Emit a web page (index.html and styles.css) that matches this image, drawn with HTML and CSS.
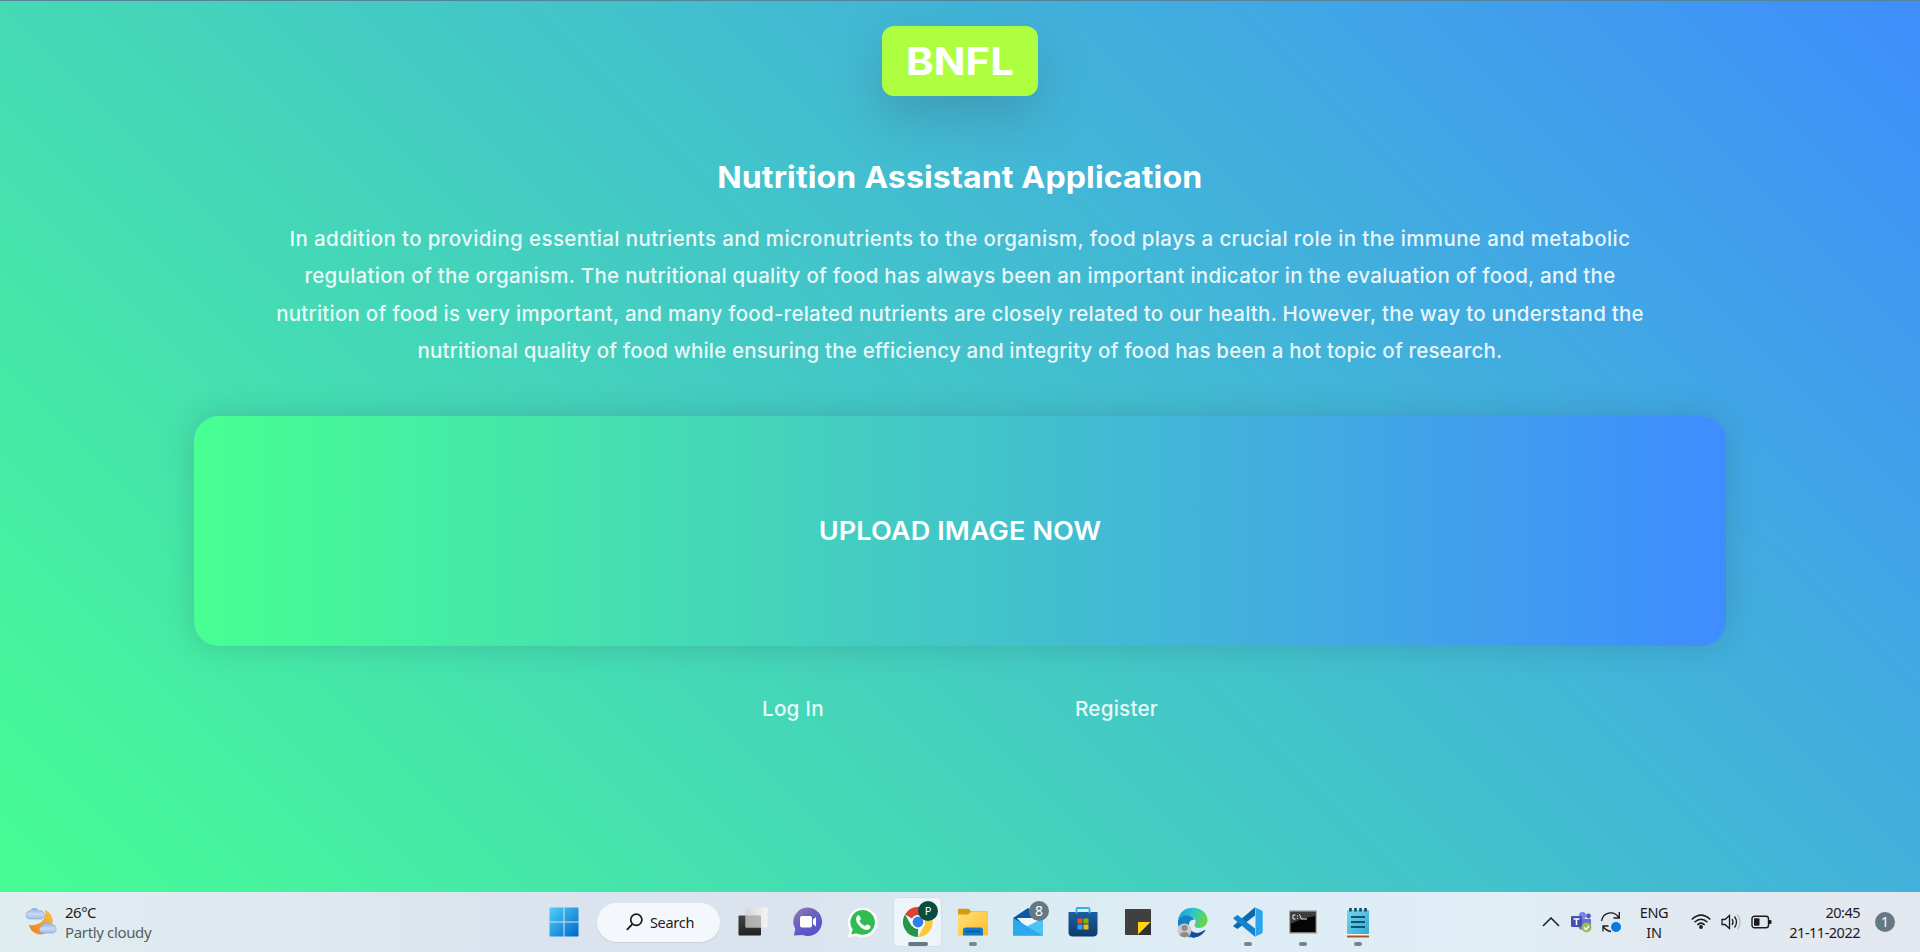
FILE: index.html
```html
<!DOCTYPE html>
<html lang="en">
<head>
<meta charset="utf-8">
<title>Nutrition Assistant Application</title>
<link rel="stylesheet" href="styles.css">
</head>
<body>
<main class="page">
  <h1 class="logo"><span class="logo-text">BNFL</span></h1>
  <h2 class="title">Nutrition Assistant Application</h2>
  <p class="intro">
    <span class="line line-1">In addition to providing essential nutrients and micronutrients to the organism, food plays a crucial role in the immune and metabolic</span>
    <span class="line line-2">regulation of the organism. The nutritional quality of food has always been an important indicator in the evaluation of food, and the</span>
    <span class="line line-3">nutrition of food is very important, and many food-related nutrients are closely related to our health. However, the way to understand the</span>
    <span class="line line-4">nutritional quality of food while ensuring the efficiency and integrity of food has been a hot topic of research.</span>
  </p>
  <div class="upload"><span class="upload-text">UPLOAD IMAGE NOW</span></div>
  <nav class="links"><a class="login">Log In</a><a class="register">Register</a></nav>
</main>
<footer class="taskbar">
  <div class="weather">
    <svg width="32" height="30" viewBox="0 0 32 30">
      <defs>
        <linearGradient id="moon" x1="1" y1="0" x2="0" y2="1"><stop offset="0" stop-color="#f9c23c"/><stop offset="1" stop-color="#ee7f22"/></linearGradient>
        <linearGradient id="cloud" x1="0" y1="0" x2="0" y2="1"><stop offset="0" stop-color="#8fabe6"/><stop offset=".55" stop-color="#c9d9f7"/><stop offset="1" stop-color="#a3bcf0"/></linearGradient>
      </defs>
      <path d="M20 3c9 3 10 16 3 22C16 30 6 27 4 18c8 1 18-3 16-15z" fill="url(#moon)"/>
      <path d="M5 12a4 4 0 0 1 0-8 5 5 0 0 1 9 0 4 4 0 0 1 2 8z" fill="url(#cloud)" stroke="#86a2dc" stroke-width=".6"/>
      <path d="M17 26a3.600 3.600 0 0 1 0-7 5 5 0 0 1 9-1 4 4 0 0 1 2 8z" fill="url(#cloud)" stroke="#86a2dc" stroke-width=".6"/>
    </svg>
    <div class="weather-text"><span class="temp">26°C</span><span class="cond">Partly cloudy</span></div>
  </div>
  <div class="slot">
    <svg width="30" height="30" viewBox="0 0 30 30">
      <defs><linearGradient id="win" x1="0" y1="0" x2="1" y2="1"><stop offset="0" stop-color="#4fd0fb"/><stop offset="1" stop-color="#0067c8"/></linearGradient></defs>
      <path d="M1.500.5H14.500V14.500H.5V1.500a1 1 0 0 1 1-1zM15.500.5H28.500a1 1 0 0 1 1 1V14.500H15.500zM.5 15.500H14.500V29.500H1.500a1 1 0 0 1-1-1zM15.500 15.500H29.500V28.500a1 1 0 0 1-1 1H15.500z" fill="url(#win)"/>
    </svg>
  </div>
  <div class="search">
    <svg width="17" height="18" viewBox="0 0 17 18"><circle cx="10.300" cy="6.800" r="5.600" fill="none" stroke="#1b1b1f" stroke-width="1.700"/><path d="M6.300 11.200.9 16.800" stroke="#1b1b1f" stroke-width="1.900"/></svg>
    <span class="search-text">Search</span>
  </div>
  <div class="slot">
    <svg width="30" height="30" viewBox="0 0 30 30">
      <defs><linearGradient id="dark" x1="0" y1="0" x2="0" y2="1"><stop offset="0" stop-color="#444"/><stop offset="1" stop-color="#222"/></linearGradient><linearGradient id="pane" x1="0" y1="0" x2="1" y2="0"><stop offset="0" stop-color="#d4d4d4"/><stop offset="1" stop-color="#f5f5f5"/></linearGradient></defs>
      <rect x=".5" y="8.500" width="22.500" height="20" rx="1" fill="url(#dark)"/><rect x="7.500" y=".5" width="22" height="20" rx="1" fill="url(#pane)" opacity=".9"/><path d="M7.500 8.500H23V20.500H7.500z" fill="#a5a5a5" opacity=".7"/>
    </svg>
  </div>
  <div class="slot">
    <svg width="30" height="30" viewBox="0 0 30 30">
      <defs><linearGradient id="chat" x1="0" y1="0" x2=".7" y2="1"><stop offset="0" stop-color="#a57cae"/><stop offset=".4" stop-color="#6b66c0"/><stop offset="1" stop-color="#5450cc"/></linearGradient></defs>
      <path d="M15 .5a14.300 14.300 0 1 1-5.500 27.600L.8 28.500 2.300 22A14.300 14.300 0 0 1 15 .5z" fill="url(#chat)"/><rect x="7" y="9" width="12" height="11.500" rx="2" fill="#fff"/><path d="M20 12.500 23 10v9.500L20 17z" fill="#fff"/>
    </svg>
  </div>
  <div class="slot">
    <svg width="31" height="31" viewBox="0 0 31 31">
      <path d="M15.500.5a15 15 0 1 1-6.500 28.400L.7 30.500l2.200-7.300A15 15 0 0 1 15.500.5z" fill="#fafdfb"/><path d="M15.500 3a12.400 12.400 0 1 1-6.100 23.200L4.200 27.500l1.500-5A12.400 12.400 0 0 1 15.500 3z" fill="#2ebc53"/>
      <path d="M10.700 8.600c.7-.6 1.500-.4 1.900.4l1.200 2.600c.3.800-.8 1.700-1.200 2.300 1.300 2.500 3 4 5.600 5.200.7-.7 1.400-2 2.300-1.600l2.600 1.300c1 .6.200 2.400-.6 3.100-2.200 1.900-6.200.5-9.100-2-3.500-3-6.200-7.800-2.700-11.300z" fill="#fff"/>
    </svg>
  </div>
  <div class="slot active">
    <svg width="30" height="30" viewBox="0 0 30 30">
      <path d="M15 15 2 7.500A15 15 0 0 1 28 7.500z" fill="#dc4237"/><path d="M15 15 15 30A15 15 0 0 1 2 7.500L8.500 18.700z" fill="#239747"/><path d="M15 8H28A15 15 0 0 1 15 30L21.500 18z" fill="#fcc934"/><circle cx="15" cy="15" r="7" fill="#fff"/><circle cx="15" cy="15" r="5.400" fill="#2f7de9"/>
    </svg>
    <span class="badge profile">P</span><i class="mark wide"></i>
  </div>
  <div class="slot">
    <svg width="30" height="28" viewBox="0 0 30 28">
      <defs><linearGradient id="fold" x1="0" y1="0" x2="1" y2="1"><stop offset="0" stop-color="#ffe07a"/><stop offset="1" stop-color="#fbbd25"/></linearGradient></defs>
      <path d="M0 1.500Q0 .8 1 .8H10Q12 .8 13 3.500H29Q30 3.500 30 4.500V12H0z" fill="#d99a12"/><path d="M0 6.500H10L13 4H29.500L30 5V27.500H0z" fill="url(#fold)"/><path d="M5 27.500V22Q5 19.500 7.500 19.500H22.500Q25 19.500 25 22V27.500z" fill="#1478c8"/><path d="M8 23.500H22" stroke="#0b4f8c" stroke-width="1.500"/>
    </svg><i class="mark"></i>
  </div>
  <div class="slot">
    <svg width="30" height="30" viewBox="0 0 30 30">
      <path d="M0 11 15 1 30 11 22 19H8z" fill="#0d57a8"/><path d="M4 11H26V19L15 23z" fill="#f2f5fa"/><path d="M0 11 30 28.500H0z" fill="#1e9fe6"/><path d="M30 11V28.500H0L14 19.500z" fill="#4cc3f5"/><path d="M0 11 14 19.500 30 28.500H0z" fill="#2aa9ec"/>
    </svg><span class="badge count">8</span>
  </div>
  <div class="slot">
    <svg width="30" height="30" viewBox="0 0 30 30">
      <defs><linearGradient id="store" x1="0" y1="0" x2="0" y2="1"><stop offset="0" stop-color="#1c5fa3"/><stop offset="1" stop-color="#0d3a6b"/></linearGradient></defs>
      <path d="M8.500 6V2Q8.500 1 9.500 1H20.500Q21.500 1 21.500 2V6" fill="none" stroke="#35b2e5" stroke-width="1.800"/><path d="M.5 5H29.500V25Q29.500 29.500 25 29.500H5Q.5 29.500.5 25z" fill="url(#store)"/><path d="M9.500 11.500H14.500V16.500H9.500z" fill="#ee4f24"/><path d="M15.500 11.500H20.500V16.500H15.500z" fill="#7fba00"/><path d="M9.500 17.500H14.500V22.500H9.500z" fill="#28a4ea"/><path d="M15.500 17.500H20.500V22.500H15.500z" fill="#ffb902"/><path d="M8.500 5V6.500M21.500 5V6.500" stroke="#35b2e5" stroke-width="1.800"/>
    </svg>
  </div>
  <div class="slot">
    <svg width="28" height="28" viewBox="0 0 28 28"><path d="M2 1H26Q27 1 27 2V14L14 27H2Q1 27 1 26V2Q1 1 2 1z" fill="#404040"/><path d="M14 14H27V27H14z" fill="#303030"/><path d="M14 14H26.500L14 26.500z" fill="#ffd60a"/></svg>
  </div>
  <div class="slot">
    <svg width="31" height="31" viewBox="0 0 31 31">
      <defs><linearGradient id="edge" x1="0" y1="0" x2="1" y2=".3"><stop offset="0" stop-color="#1798d8"/><stop offset=".5" stop-color="#2bc3d2"/><stop offset="1" stop-color="#62d84e"/></linearGradient></defs>
      <path d="M1 13.500C2 5 8.500.7 15.500.7 24 .7 30.500 6 30.500 13c0 5-4 8-8.500 8-3.500 0-4.500-1.500-4.500-2.500s1-1.500 1-4c0-3-3-5.500-7-5.500-5 0-9 2-10.500 4.500z" fill="url(#edge)"/><path d="M1 13.500C3 9.500 7 8 11 8.500c4 .5 6 2.500 6.500 4.500-3-1-6 1.500-5.500 5.500.5 5 5.500 8.500 11 7 3-.7 4-2 5.500-2.500-3 5-7.500 7.500-13 7.500C7 30.500 0 23 1 13.500z" fill="#1680c9"/><path d="M12 18c0 6 6 10 11 7.500 2-.7 4-2.500 5.500-2.500-3 5-7.500 7.500-13 7.500C11 28 9 20 12 18z" fill="#114b98"/>
      <circle cx="7.500" cy="23.500" r="7" fill="#c8ccd0"/><circle cx="7.500" cy="21" r="3" fill="#938a84"/><path d="M2.800 28.500Q3 25 7.500 25T12.200 28.500Q7.500 32 2.800 28.500z" fill="#938a84"/>
    </svg>
  </div>
  <div class="slot">
    <svg width="30" height="30" viewBox="0 0 30 30"><path d="M22 .3V8.500L4.500 22 .5 19.500Q0 19 .5 18.500z" fill="#0a69ad"/><path d="M22 29.700V21.500L4.500 8 .8 10.500Q0 11 .8 12z" fill="#1583cc"/><path d="M21.500.2 28.500 3.200Q29.700 4 29.700 5.500V24.500Q29.700 26 28.500 26.800L21.500 29.800Q22.500 29 22.500 27V3Q22.500 1 21.500.2z" fill="#2aa4ee"/></svg><i class="mark"></i>
  </div>
  <div class="slot">
    <svg width="28" height="24" viewBox="0 0 28 24"><rect x=".7" y="1" width="26.600" height="22" fill="#050505" stroke="#a9a9a9" stroke-width="1.400"/><path d="M1.500 2H26.500V6Q13 8 1.500 14z" fill="#555" opacity=".7"/><path d="M6.500 5H4V9H6.500M8.500 5.500V6.500M8.500 8V9M10.500 4.500 12.500 9.500M13 9H18" fill="none" stroke="#eee" stroke-width="1"/></svg><i class="mark"></i>
  </div>
  <div class="slot">
    <svg width="24" height="31" viewBox="0 0 24 31">
      <defs><linearGradient id="note" x1="0" y1="0" x2="1" y2="1"><stop offset="0" stop-color="#76d5ee"/><stop offset="1" stop-color="#35a9cf"/></linearGradient></defs>
      <path d="M1 26H23V30.500H1z" fill="#f6f6f6"/><path d="M1 28.500H23V30.500H1z" fill="#a9541c"/><rect x="1" y="3" width="22" height="24" rx="1" fill="url(#note)"/><path d="M5 10H19M5 15H19M5 20H19" stroke="#0c5475" stroke-width="1.800"/><path d="M4.500 1V4.500M9.500 1V4.500M14.500 1V4.500M19.500 1V4.500" stroke="#17485c" stroke-width="2.600"/>
    </svg><i class="mark"></i>
  </div>
  <div class="tray">
    <svg class="tray-icon" width="18" height="10" viewBox="0 0 18 10"><path d="M1 9 9 1 17 9" fill="none" stroke="#1b1b1f" stroke-width="1.500"/></svg>
    <svg class="tray-icon" width="22" height="22" viewBox="0 0 22 22"><circle cx="12.500" cy="4.500" r="3.600" fill="#7b83eb"/><circle cx="18.500" cy="5" r="2.400" fill="#5059c9"/><path d="M8 8H21V15Q20 19 17 19H13Q9 19 8 15z" fill="#6870d8"/><rect x="1" y="5" width="11" height="11" rx="1" fill="#464eb8"/><path d="M3.500 8H9.500M6.500 8V14" stroke="#fff" stroke-width="1.500"/><circle cx="16.500" cy="16.500" r="5" fill="#92c353"/><path d="M14 16.500 16 18.500 19 15" fill="none" stroke="#fff" stroke-width="1.300"/></svg>
    <svg class="tray-icon" width="22" height="22" viewBox="0 0 22 22"><path d="M1.500 10C3 1.500 13-1.500 19 6.500M19.300 1V7H13.500M3 20.500V15H8.500M3 15.500Q6.500 20 11 20.500" fill="none" stroke="#1b1b1f" stroke-width="1.300"/><circle cx="16" cy="16" r="5" fill="#0a7bdb"/></svg>
    <div class="lang"><span>ENG</span><span>IN</span></div>
    <svg class="tray-icon" width="20" height="16" viewBox="0 0 20 16"><path d="M.7 5.500Q10-3.300 19.300 5.500M3.500 8.300Q10 2.300 16.500 8.300M6.300 11Q10 7.300 13.700 11" fill="none" stroke="#1b1b1f" stroke-width="1.500"/><circle cx="10" cy="13" r="1.900" fill="#1b1b1f"/></svg>
    <svg class="tray-icon" width="20" height="18" viewBox="0 0 20 18"><path d="M1 6.500H4L8.500 2.500V15.500L4 11.500H1z" fill="none" stroke="#1b1b1f" stroke-width="1.300"/><path d="M11 6Q13 9 11 12M13.500 3.500Q17.500 9 13.500 14.500" fill="none" stroke="#1b1b1f" stroke-width="1.300"/><path d="M16.500 1.500Q21.500 9 16.500 16.500" fill="none" stroke="#b3b7bd" stroke-width="1.200"/></svg>
    <svg class="tray-icon" width="21" height="14" viewBox="0 0 21 14"><rect x="1" y="1.200" width="16.500" height="11.600" rx="2.500" fill="none" stroke="#1b1b1f" stroke-width="1.400"/><rect x="3" y="3.300" width="5.500" height="7.400" rx="1" fill="#1b1b1f"/><path d="M18 5H19.500Q20.500 5 20.500 6V8Q20.500 9 19.500 9H18z" fill="#1b1b1f"/></svg>
    <div class="clock"><span>20:45</span><span class="date">21-11-2022</span></div>
    <span class="notice">1</span>
  </div>
</footer>
</body>
</html>
```
FILE: styles.css
```css
* { box-sizing: border-box; }
body { margin: 0; width: 1920px; height: 952px; overflow: hidden; display: flex; flex-direction: column; font-family: Inter, "Open Sans", sans-serif; }
.page { height: 892px; border-top: 1px solid #53849a; background: linear-gradient(45deg, #47fd94, #3f8efc); color: #fff; display: flex; flex-direction: column; align-items: center; }
.logo { margin: 25px 0 0; width: 156px; height: 70px; border-radius: 12px; background: #adff3f; box-shadow: 0 20px 50px rgba(50, 70, 90, .25); display: flex; align-items: center; justify-content: center; font-size: 38px; font-weight: 700; line-height: 1; }
.logo-text { transform: scaleX(1.1); }
.title { margin: 63px 0 0; font-size: 30px; line-height: 36px; font-weight: 700; letter-spacing: .1px; white-space: nowrap; transform: scaleX(1.070); }
.intro { margin: 25px 0 0; font-size: 20.500px; line-height: 37.400px; font-weight: 500; text-align: center; color: rgba(255, 255, 255, .9); }
.line { display: block; white-space: nowrap; }
.line-1 { letter-spacing: .38px; }
.line-2 { letter-spacing: .275px; }
.line-3 { letter-spacing: .24px; }
.line-4 { letter-spacing: .17px; }
.upload { margin-top: 46px; width: 1532px; height: 230px; flex: none; border-radius: 25px; background: linear-gradient(90deg, #47ff92, #3f8cff); box-shadow: 0 0 30px rgba(40, 70, 80, .22); display: flex; align-items: center; justify-content: center; font-size: 25.300px; font-weight: 600; }
.upload-text { letter-spacing: .1px; transform: scaleX(1.070); }
.links { margin-top: 46px; width: 396px; display: flex; justify-content: space-between; font-size: 20.700px; font-weight: 500; line-height: 33px; color: rgba(255, 255, 255, .9); }
.login, .register { letter-spacing: .2px; white-space: nowrap; }
.taskbar { height: 60px; display: flex; align-items: center; background: linear-gradient(90deg, #e0edf0 0, #dfe9f0 280px, #dae3ee 560px, #dae4ee 800px, #daebf2 1000px, #deedf5 1200px, #dfeef5 1500px, #e2e9f1 1640px, #e3e7f0 1920px); color: #1b1b1f; font-family: "Noto Sans", "Open Sans", sans-serif; font-size: 14px; line-height: 20px; }
.weather { width: 536px; padding-left: 25px; display: flex; align-items: center; gap: 8px; }
.weather-text { display: flex; flex-direction: column; font-size: 15px; }
.temp { letter-spacing: -.5px; }
.cond { color: #565c61; letter-spacing: -.35px; }
.slot { position: relative; width: 55px; height: 60px; flex: none; display: flex; align-items: center; justify-content: center; }
.active { width: 49px; height: 50px; margin: 0 3px; border-radius: 5px; background: #eef5fa; border: 1px solid #d2dfe8; }
.search { width: 123px; height: 39px; margin: 0 5px 0 6px; flex: none; border-radius: 20px; background: #f4f8fc; box-shadow: 0 1px 1px #c7d2dd; display: flex; align-items: center; justify-content: center; gap: 7px; padding-left: 3px; }
.search-text { font-size: 14.500px; letter-spacing: -.3px; }
.badge { position: absolute; width: 20px; height: 20px; border-radius: 50%; color: #fff; text-align: center; line-height: 20px; }
.profile { right: 3px; top: 3px; background: #064c40; font-size: 11px; }
.count { right: 6px; top: 9px; background: #657983; font-size: 14px; }
.mark { position: absolute; bottom: 6px; left: 24px; width: 8px; height: 4px; border-radius: 2px; background: #78858c; }
.wide { bottom: 0; left: 14px; width: 20px; background: #657983; }
.tray { margin-left: auto; width: 384px; display: grid; grid-template-columns: 30px 30px 30px 60px 30px 30px 30px 84px 50px; align-items: center; justify-items: center; font-size: 14.500px; }
.lang { display: flex; flex-direction: column; align-items: center; margin-right: 4px; letter-spacing: -.3px; }
.clock { display: flex; flex-direction: column; align-items: flex-end; justify-self: end; white-space: nowrap; letter-spacing: -.5px; }
.notice { width: 20px; height: 20px; border-radius: 50%; background: #657983; color: #fff; text-align: center; font-size: 14px; }
```
